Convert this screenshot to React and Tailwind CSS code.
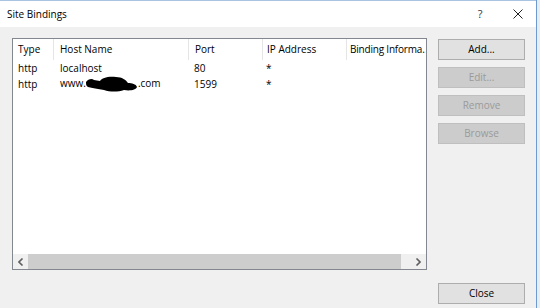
import React from 'react';

const font = { fontFamily: '"Open Sans", "Noto Sans", sans-serif' };

const columns = [
  { label: 'Type', w: 'w-[40px]', pl: 'pl-[5px]' },
  { label: 'Host Name', w: 'w-[135px]', pl: 'pl-[6px]' },
  { label: 'Port', w: 'w-[74px]', pl: 'pl-[6px]' },
  { label: 'IP Address', w: 'w-[84px]', pl: 'pl-[4px]' },
  { label: 'Binding Informa.', w: 'w-[100px]', pl: 'pl-[3px] tracking-[-0.2px]' },
];

const Redacted = () => (
  <svg width="52" height="16" viewBox="0 0 52 16" className="inline-block align-middle -mt-[2px]">
    <path d="M0 6 C2 3 6 2 8 4 L14 5 C16 2 22 0 30 1 C36 1 40 4 42 7 C46 7 50 8 51 11 C50 14 44 15 38 14 C32 16 24 16 18 14 C12 13 6 12 2 11 C0 10 0 8 0 6 Z" fill="#000" />
  </svg>
);

const Row = ({ type, host, port, ip }) => (
  <div className="flex h-[16px] items-center text-[10px] text-black">
    <div className="w-[40px] shrink-0 pl-[5px]">{type}</div>
    <div className="w-[135px] shrink-0 pl-[7px] whitespace-nowrap">{host}</div>
    <div className="w-[74px] shrink-0 pl-[6px]">{port}</div>
    <div className="w-[84px] shrink-0 pl-[4px]">{ip}</div>
  </div>
);

const Btn = ({ children, disabled }) => (
  <button
    disabled={disabled}
    className={
      disabled
        ? 'w-[87px] h-[21px] border border-[#bfbfbf] bg-[#cccccc] text-[10px] text-[#9a9a9a]'
        : 'w-[87px] h-[21px] border border-[#adadad] bg-[#e1e1e1] text-[10px] text-black'
    }
  >
    {children}
  </button>
);

export default function App() {
  return (
    <div className="flex w-[540px] h-[308px] overflow-hidden" style={font}>
      <div className="flex flex-col w-[536px] h-full">
        {/* title bar */}
        <div className="flex items-center h-[27px] bg-white border-t border-[#a9c4e0]">
          <span className="pl-[7px] text-[10px] text-black flex-1">Site Bindings</span>
          <span className="w-[30px] mr-[18px] text-center text-[11px] text-[#333]">?</span>
          <svg width="10" height="10" viewBox="0 0 10 10" className="mr-[13px]">
            <path d="M0.5 0.5 L9.5 9.5 M9.5 0.5 L0.5 9.5" stroke="#222" strokeWidth="1" />
          </svg>
        </div>

        {/* body */}
        <div className="flex flex-col flex-1 bg-[#f0f0f0] pt-[11px] pl-[12px] pr-[11px]">
          <div className="flex gap-[11px]">
            <div className="flex flex-col w-[415px] h-[232px] border border-[#828790] bg-white overflow-hidden">
              <div className="flex h-[21px] items-center text-[10px] text-black">
                {columns.map((c, i) => (
                  <div
                    key={c.label}
                    className={`${c.w} ${c.pl} shrink-0 h-full flex items-center whitespace-nowrap overflow-hidden ${i === 0 ? '' : 'border-l border-[#e5e5e5]'}`}
                  >
                    {c.label}
                  </div>
                ))}
              </div>
              <Row type="http" host="localhost" port="80" ip="*" />
              <Row
                type="http"
                host={<span>www.<Redacted />.com</span>}
                port="1599"
                ip="*"
              />
              <div className="flex-1" />
              {/* horizontal scrollbar */}
              <div className="flex h-[15px] bg-[#f0f0f0]">
                <div className="w-[15px] flex items-center justify-center">
                  <svg width="6" height="8" viewBox="0 0 6 8">
                    <path d="M4.5 0.5 L1 4 L4.5 7.5" stroke="#606060" strokeWidth="1.6" fill="none" />
                  </svg>
                </div>
                <div className="w-[373px] bg-[#cdcdcd]" />
                <div className="flex-1 flex items-center justify-end pr-[5px]">
                  <svg width="6" height="8" viewBox="0 0 6 8">
                    <path d="M1.5 0.5 L5 4 L1.5 7.5" stroke="#606060" strokeWidth="1.6" fill="none" />
                  </svg>
                </div>
              </div>
            </div>

            <div className="flex flex-col gap-[7px] pt-[1px]">
              <Btn>Add...</Btn>
              <Btn disabled>Edit...</Btn>
              <Btn disabled>Remove</Btn>
              <Btn disabled>Browse</Btn>
            </div>
          </div>

          <div className="flex justify-end mt-[13px]">
            <Btn>Close</Btn>
          </div>
        </div>
      </div>
      <div className="w-[1px] h-full bg-[#6b9bd1]" />
      <div className="flex-1 h-full bg-[#e8edf3]" />
    </div>
  );
}
